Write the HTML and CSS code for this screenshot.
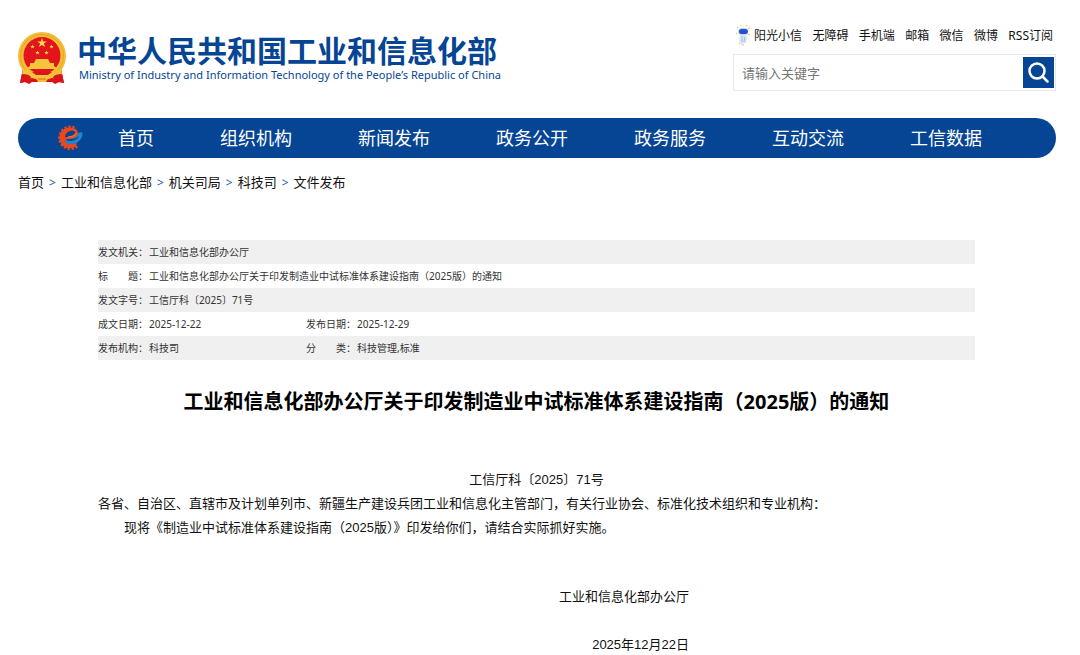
FILE: index.html
```html
<!DOCTYPE html>
<html lang="zh-CN">
<head>
<meta charset="utf-8">
<meta name="viewport" content="width=device-width, initial-scale=1">
<title>工业和信息化部办公厅关于印发制造业中试标准体系建设指南（2025版）的通知</title>
<link rel="stylesheet" href="styles.css">
</head>
<body>
<header class="header">
  <a class="brand" href="#">
    <svg class="emblem" viewBox="0 0 48 54" aria-hidden="true">
      <path d="M5 36 2 51l5-1 4 2 3-2h20l3 2 4-2 5 1-3-15z" fill="#d9151b"/>
      <circle cx="24" cy="24" r="24" fill="#f3bd35"/>
      <circle cx="24" cy="24" r="21.500" fill="none" stroke="#e5a62a" stroke-width="1"/>
      <circle cx="24" cy="23.500" r="18.500" fill="#e3151c"/>
      <path d="m24 6 1.200 3.400h3.600l-2.900 2.200 1.100 3.500-3-2.100-3 2.100 1.100-3.500-2.900-2.200h3.600z" fill="#ffd84a"/>
      <g fill="#ffd84a">
        <path id="star" d="m14.500 12.500.6 1.500h1.600l-1.300 1 .5 1.600-1.400-1-1.400 1 .5-1.600-1.300-1h1.600z"/>
        <use href="#star" x="19"/><use href="#star" x="5" y="6"/><use href="#star" x="14" y="6"/>
      </g>
      <path d="M18 27h12l2 4h4v3l4 3H8l4-3v-3h4z" fill="#f5c63c"/>
      <path d="M5 37q5 1 9 4l20 0q4-3 9-4l1 5q-2 7-6 8l-3-4h-5l-2 4h-8l-2-4h-5l-3 4q-4-1-6-8z" fill="#f4c139"/>
      <path d="M4 42q7 0 9 3l-2 6-4-1-5 1zM44 42q-7 0-9 3l2 6 4-1 5 1zM14 40h20l-4 3H18z" fill="#d9151b"/>
      <path d="M20 47h8" stroke="#cf6c19" stroke-width="1" fill="none"/>
    </svg>
    <span class="brand-text">
      <span class="brand-cn">中华人民共和国工业和信息化部</span>
      <span class="brand-en">Ministry of Industry and Information Technology of the People’s Republic of China</span>
    </span>
  </a>
  <div class="tools">
    <ul class="quick">
      <li><a class="mascot-link" href="#"><svg class="mascot" viewBox="0 0 14 21" aria-hidden="true">
        <path d="M2 3 1 2m4-1V0m5 1 1-1m1 4 2-1M1 8 0 9m12 0 2 1M4 18l-1 1m4 1v1" stroke="#f2cf54" stroke-width="1.300"/>
        <path d="M4 10h6l1 4-1 4H8v2H5v-2l-2-1z" fill="#d9e6fa"/>
        <path d="M6 11v6m3-5-1 5" stroke="#9dbbe9"/>
        <rect x="2" y="3" width="10" height="7" rx="3.500" fill="#c8daf8"/>
        <rect x="3" y="4" width="9" height="5" rx="2.500" fill="#2352cf"/>
      </svg>阳光小信</a></li>
      <li><a href="#">无障碍</a></li>
      <li><a href="#">手机端</a></li>
      <li><a href="#">邮箱</a></li>
      <li><a href="#">微信</a></li>
      <li><a href="#">微博</a></li>
      <li><a href="#">RSS订阅</a></li>
    </ul>
    <form class="search" role="search">
      <input class="search-input" type="text" placeholder="请输入关键字" aria-label="请输入关键字">
      <button class="search-button" type="button" aria-label="搜索">
        <svg viewBox="0 0 31 31" aria-hidden="true"><circle cx="14" cy="14" r="7.500"/><path d="m19.500 19.500 5 5"/></svg>
      </button>
    </form>
  </div>
</header>

<nav class="nav" aria-label="主导航">
  <svg class="nav-logo" viewBox="0 0 28 28" aria-hidden="true">
    <path d="M21 22A10.500 10.500 0 1 1 20 5" fill="none" stroke="#e6491f" stroke-width="3.500" stroke-dasharray="2.200 1.600"/>
    <path d="M20 22C13 27 4 23 3.500 14 3 6 12 1 19 5c4 2 4 6 1 8-4 3-9 2-10 2 1 4 5 6 11 4z" fill="#e6491f"/>
    <path d="M9 13c0-5 7-8 10-5 2 2-2 5-8 5z" fill="#064593"/>
    <path d="M10 14c5 2 11 0 12-5l4-1c2 5-3 11-9 12-4 1-8-1-8-4 5 2 12 1 14-4-3 3-8 4-13 2z" fill="#2583cb"/>
    <path d="M12 13c4 0 7-1 8-4" fill="none" stroke="#f06a32" stroke-width="1.500"/>
  </svg>
  <ul class="nav-list">
    <li><a href="#">首页</a></li>
    <li><a href="#">组织机构</a></li>
    <li><a href="#">新闻发布</a></li>
    <li><a href="#">政务公开</a></li>
    <li><a href="#">政务服务</a></li>
    <li><a href="#">互动交流</a></li>
    <li><a href="#">工信数据</a></li>
  </ul>
</nav>

<nav class="crumbs" aria-label="当前位置">
  <a href="#">首页</a><span class="sep">&gt;</span><a href="#">工业和信息化部</a><span class="sep">&gt;</span><a href="#">机关司局</a><span class="sep">&gt;</span><a href="#">科技司</a><span class="sep">&gt;</span><a href="#">文件发布</a>
</nav>

<main class="document">
  <table class="meta">
    <colgroup><col class="col-label"><col class="col-value"><col class="col-label"><col></colgroup>
    <tbody>
      <tr><th scope="row">发文机关：</th><td colspan="3">工业和信息化部办公厅</td></tr>
      <tr><th scope="row">标　　题：</th><td colspan="3">工业和信息化部办公厅关于印发制造业中试标准体系建设指南（2025版）的通知</td></tr>
      <tr><th scope="row">发文字号：</th><td colspan="3">工信厅科〔2025〕71号</td></tr>
      <tr><th scope="row">成文日期：</th><td>2025-12-22</td><th scope="row">发布日期：</th><td>2025-12-29</td></tr>
      <tr><th scope="row">发布机构：</th><td>科技司</td><th scope="row">分　　类：</th><td>科技管理,标准</td></tr>
    </tbody>
  </table>
  <h1 class="title">工业和信息化部办公厅关于印发制造业中试标准体系建设指南（2025版）的通知</h1>
  <article class="body">
    <p class="number">工信厅科〔2025〕71号</p>
    <p>各省、自治区、直辖市及计划单列市、新疆生产建设兵团工业和信息化主管部门，有关行业协会、标准化技术组织和专业机构：</p>
    <p class="indent">现将《制造业中试标准体系建设指南（2025版）》印发给你们，请结合实际抓好实施。</p>
    <div class="signature">
      <p>工业和信息化部办公厅</p>
      <p>2025年12月22日</p>
    </div>
  </article>
</main>
</body>
</html>
```
FILE: styles.css
```css
* {
  box-sizing: border-box;
}

body {
  margin: 0;
  padding: 0 24px 0 18px;
  background: #fff;
  color: #111;
  font-family: "Noto Sans", "Noto Sans CJK SC", sans-serif;
  font-size: 13px;
}

a {
  color: inherit;
  text-decoration: none;
}

ul {
  margin: 0;
  padding: 0;
  list-style: none;
}

.header {
  display: flex;
  justify-content: space-between;
  padding-top: 24px;
}

.brand {
  display: flex;
  gap: 11px;
  padding-top: 8px;
  color: #064593;
}

.emblem {
  width: 48px;
  height: 54px;
}

.brand-text {
  display: flex;
  flex-direction: column;
  gap: 3px;
}

.brand-cn {
  font-family: "Noto Sans CJK SC", sans-serif;
  font-size: 30px;
  font-weight: 700;
  line-height: 34px;
}

.brand-en {
  padding-left: 2px;
  font-size: 11px;
  line-height: 12px;
}

.tools {
  width: 323px;
}

.quick {
  display: flex;
  justify-content: space-between;
  align-items: center;
  height: 22px;
  padding: 0 3px;
  font-size: 12px;
  white-space: nowrap;
}

.mascot-link {
  display: flex;
  align-items: center;
  gap: 4px;
}

.mascot {
  width: 14px;
  height: 21px;
}

.search {
  display: flex;
  align-items: center;
  margin-top: 8px;
  padding: 2px 1px;
  border: 1px solid #e8e8e8;
}

.search-input {
  flex: 1;
  min-width: 0;
  padding: 0 7px;
  border: 0;
  outline: 0;
  background: none;
  font: inherit;
}

.search-input::placeholder {
  color: #757575;
}

.search-button {
  width: 31px;
  height: 31px;
  padding: 0;
  border: 0;
  background: #064593;
}

.search-button svg {
  display: block;
  fill: none;
  stroke: #fff;
  stroke-width: 2.5;
  stroke-linecap: round;
}

.nav {
  display: flex;
  align-items: center;
  height: 40px;
  margin-top: 27px;
  padding-left: 38px;
  border-radius: 20px;
  background: #064593;
  color: #fff;
}

.nav-logo {
  width: 28px;
  height: 28px;
}

.nav-list {
  display: flex;
  gap: 66px;
  padding-left: 34px;
  font-size: 18px;
  line-height: 40px;
  white-space: nowrap;
}

.crumbs {
  padding-top: 14px;
  line-height: 20px;
}

.sep {
  padding: 0 5px;
  color: #1d5ba8;
  font-size: 12px;
}

.document {
  padding: 47px 81px 0 80px;
}

.meta {
  width: 100%;
  border-collapse: collapse;
  table-layout: fixed;
  color: #333;
  font-size: 10px;
  line-height: 24px;
}

.col-label {
  width: 51px;
}

.col-value {
  width: 157px;
}

.meta tr:nth-child(odd) {
  background: #f0f0f0;
}

.meta th,
.meta td {
  padding: 0;
  font-weight: 400;
  text-align: left;
  white-space: nowrap;
}

.title {
  margin: 27px 0 0;
  color: #000;
  font-size: 20px;
  font-weight: 700;
  line-height: 30px;
  text-align: center;
}

.body {
  margin-top: 51px;
  font-family: "Liberation Sans", "Noto Sans CJK SC", sans-serif;
  line-height: 24px;
}

.body p {
  margin: 0;
}

.body .number {
  text-align: center;
}

.body .indent {
  text-indent: 2em;
}

.signature {
  display: flex;
  flex-direction: column;
  gap: 24px;
  margin-top: 45px;
  padding-right: 286px;
  text-align: right;
}
```
